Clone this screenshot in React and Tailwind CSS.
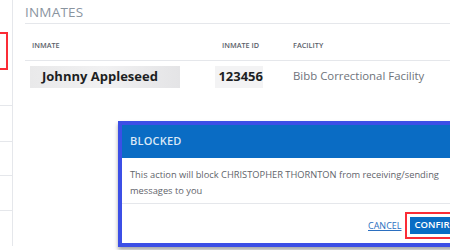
export default function App() {
  return (
    <div className="relative w-[450px] h-[250px] overflow-hidden bg-white font-['Open_Sans',sans-serif]">
      <div className="flex h-full">
        {/* Sidebar stub */}
        <div className="relative w-[13px] shrink-0 border-r border-gray-200 h-[246px]">
          <div className="h-[32px]" />
          <div className="h-[38px] w-[8px] border-2 border-l-0 border-red-500 bg-white" />
          <div className="h-[36px] border-b border-gray-200" />
          <div className="h-[36px] border-b border-gray-200" />
          <div className="h-[34px] border-b border-gray-200" />
          <div className="h-[35px] border-b border-gray-200" />
        </div>

        {/* Main */}
        <div className="flex-1 pl-[12px]">
          <div className="pt-[4px] pb-[3px] border-b border-gray-200 text-[13.5px] leading-[16px] text-[#8a949f] tracking-[0.2px]">
            INMATES
          </div>
          <div className="flex items-center h-[37px] pt-[6px] border-b border-gray-200 text-[7.3px] font-semibold text-[#5b616a] uppercase">
            <div className="w-[197px] pl-[7px]">Inmate</div>
            <div className="w-[71px]">Inmate ID</div>
            <div>Facility</div>
          </div>
          <div className="flex items-start pt-[5px]">
            <div className="w-[197px] pl-[5px]">
              <div className="w-[150px] h-[22px] flex items-center pl-[12px] bg-gradient-to-r from-[#e9e9ea] via-[#f1f1f2] to-[#e4e4e6] text-[13px] font-bold text-[#1d1f23]">
                Johnny Appleseed
              </div>
            </div>
            <div className="w-[71px]">
              <div className="w-[48px] h-[22px] flex items-center justify-end -ml-[7px] bg-[#f3f3f4] text-[13px] font-bold text-[#1d1f23]">
                123456
              </div>
            </div>
            <div className="text-[11.4px] leading-[18px] text-[#6e737b] pt-[1px]">
              Bibb Correctional Facility
            </div>
          </div>
        </div>
      </div>

      {/* Dialog */}
      <div className="absolute left-[118px] top-[121px] w-[345px] h-[126px] border-[4px] border-[#3c4fe6] bg-white shadow-[0_3px_4px_rgba(0,0,0,0.35)]">
        <div className="h-[33px] bg-[#0a6cc4] flex items-center pl-[8px] text-[11px] font-semibold text-[#dbe9f7] tracking-[0.2px]">
          BLOCKED
        </div>
        <div className="h-[46px] border-b border-gray-200 pl-[8px] pt-[9px] text-[9.3px] leading-[16px] text-[#5f646b]">
          <div>This action will block CHRISTOPHER THORNTON from receiving/sending</div>
          <div>messages to you</div>
        </div>
        <div className="flex items-center pl-[246px] pt-[8px]">
          <span className="text-[9px] text-[#2b6fc0] underline">CANCEL</span>
          <div className="ml-[3px] border-2 border-red-500 p-[3px]">
            <div className="bg-[#0a6cc4] text-white text-[9.5px] font-semibold px-[5px] h-[17px] flex items-center">
              CONFIRM
            </div>
          </div>
        </div>
      </div>
    </div>
  );
}
